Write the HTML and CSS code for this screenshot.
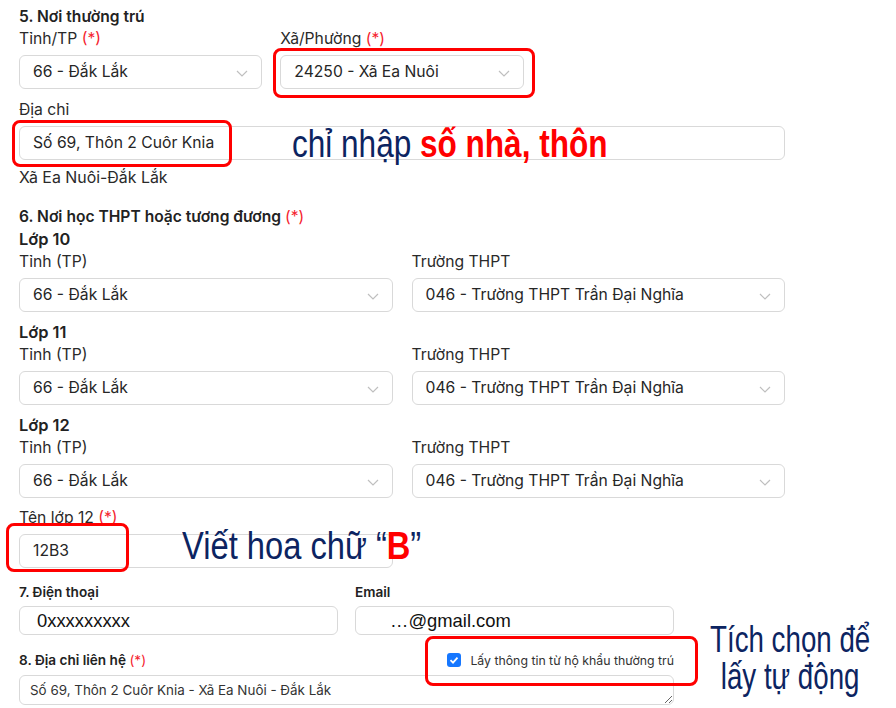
FILE: index.html
```html
<!DOCTYPE html>
<html lang="vi">
<head>
  <meta charset="UTF-8">
  <title>Hồ sơ đăng ký</title>
  <link rel="stylesheet" href="styles.css">
</head>
<body>
  <div class="form">
    <div class="sec-title">5. Nơi thường trú</div>
    <div class="grid3">
      <div class="field">
        <label>Tỉnh/TP <span class="req">(*)</span></label>
        <div class="select">66 - Đắk Lắk<svg class="arrow" viewBox="0 0 12 7"><polyline points="1,1 6,6 11,1"/></svg></div>
      </div>
      <div class="field">
        <label>Xã/Phường <span class="req">(*)</span></label>
        <div class="select">24250 - Xã Ea Nuôi<svg class="arrow" viewBox="0 0 12 7"><polyline points="1,1 6,6 11,1"/></svg></div>
      </div>
    </div>
    <div class="field addr-gap">
      <label>Địa chỉ</label>
      <div class="input">Số 69, Thôn 2 Cuôr Knia</div>
      <div class="hint">Xã Ea Nuôi-Đắk Lắk</div>
    </div>

    <div class="sec-title sec-gap">6. Nơi học THPT hoặc tương đương <span class="req">(*)</span></div>

    <div class="grade">Lớp 10</div>
    <div class="grid2">
      <div class="field">
        <label>Tỉnh (TP)</label>
        <div class="select">66 - Đắk Lắk<svg class="arrow" viewBox="0 0 12 7"><polyline points="1,1 6,6 11,1"/></svg></div>
      </div>
      <div class="field">
        <label>Trường THPT</label>
        <div class="select">046 - Trường THPT Trần Đại Nghĩa<svg class="arrow" viewBox="0 0 12 7"><polyline points="1,1 6,6 11,1"/></svg></div>
      </div>
    </div>

    <div class="grade gap-top">Lớp 11</div>
    <div class="grid2">
      <div class="field">
        <label>Tỉnh (TP)</label>
        <div class="select">66 - Đắk Lắk<svg class="arrow" viewBox="0 0 12 7"><polyline points="1,1 6,6 11,1"/></svg></div>
      </div>
      <div class="field">
        <label>Trường THPT</label>
        <div class="select">046 - Trường THPT Trần Đại Nghĩa<svg class="arrow" viewBox="0 0 12 7"><polyline points="1,1 6,6 11,1"/></svg></div>
      </div>
    </div>

    <div class="grade gap-top">Lớp 12</div>
    <div class="grid2">
      <div class="field">
        <label>Tỉnh (TP)</label>
        <div class="select">66 - Đắk Lắk<svg class="arrow" viewBox="0 0 12 7"><polyline points="1,1 6,6 11,1"/></svg></div>
      </div>
      <div class="field">
        <label>Trường THPT</label>
        <div class="select">046 - Trường THPT Trần Đại Nghĩa<svg class="arrow" viewBox="0 0 12 7"><polyline points="1,1 6,6 11,1"/></svg></div>
      </div>
    </div>

    <div class="grid2 gap-top">
      <div class="field">
        <label>Tên lớp 12 <span class="req">(*)</span></label>
        <div class="input">12B3</div>
      </div>
    </div>

    <div class="contact">
      <div class="grid2 small">
        <div class="field">
          <label class="strong">7. Điện thoại</label>
          <div class="input big">0xxxxxxxxx</div>
        </div>
        <div class="field">
          <label class="strong">Email</label>
          <div class="input big email">…@gmail.com</div>
        </div>
      </div>

      <div class="addr-head">
        <label class="strong">8. Địa chỉ liên hệ <span class="req">(*)</span></label>
        <div class="check">
          <span class="box"><svg viewBox="0 0 14 14"><polyline points="3.5,7.2 6,9.6 10.5,4.6"/></svg></span>
          Lấy thông tin từ hộ khẩu thường trú
        </div>
      </div>
      <textarea class="area" rows="1">Số 69, Thôn 2 Cuôr Knia - Xã Ea Nuôi - Đắk Lắk</textarea>
    </div>
  </div>

  <!-- chú thích hướng dẫn -->
  <div class="mark mark-ward"></div>
  <div class="mark mark-addr"></div>
  <div class="mark mark-class"></div>
  <div class="mark mark-check"></div>

  <div class="note note-addr">chỉ nhập <b>số nhà, thôn</b></div>
  <div class="note note-class">Viết hoa chữ “<b>B</b>”</div>
  <div class="note note-check">Tích chọn để<br>lấy tự động</div>
</body>
</html>
```

FILE: styles.css
```css
body {
  margin: 0;
  font-family: Inter, "Noto Sans", sans-serif;
  color: #2a2a2a;
  background: #fff;
  position: relative;
}

.form {
  width: 766px;
  padding: 5px 19px 0;
}

.sec-title {
  font-size: 15.6px;
  font-weight: 600;
  line-height: 20px;
  padding-top: 2px;
  color: #222;
}

.sec-gap {
  margin-top: 17px;
}

.grade {
  font-size: 16.4px;
  font-weight: 600;
  line-height: 21px;
  padding-top: 2px;
  color: #222;
}

.gap-top {
  margin-top: 8px;
}

.addr-gap {
  margin-top: 9px;
}

.req {
  color: #f5222d;
  font-weight: 400;
}

.grid3 {
  display: grid;
  grid-template-columns: repeat(3, 1fr);
  column-gap: 18px;
}

.grid2 {
  display: grid;
  grid-template-columns: 1fr 1fr;
  column-gap: 19px;
}

.field label {
  display: block;
  font-size: 15.7px;
  line-height: 20px;
  padding-top: 2px;
  margin-bottom: 6px;
}

.select, .input {
  box-sizing: border-box;
  height: 34px;
  border: 1px solid #d9d9d9;
  border-radius: 6px;
  padding: 0 13px;
  font-size: 15.7px;
  line-height: 32px;
  color: #262626;
  position: relative;
}

.arrow {
  position: absolute;
  right: 13px;
  top: 14px;
  width: 12px;
  height: 7px;
  fill: none;
  stroke: #bfbfbf;
  stroke-width: 1.2;
}

.hint {
  font-size: 15.9px;
  line-height: 20px;
  padding-top: 2px;
  margin-top: 6px;
}

.contact {
  width: 655px;
  margin-top: 12px;
}

.grid2.small {
  column-gap: 17px;
}

.field label.strong, .addr-head label.strong {
  font-size: 13.6px;
  font-weight: 600;
  line-height: 20px;
  padding-top: 2px;
  margin-bottom: 4px;
  color: #222;
}

.input.big {
  height: 29px;
  line-height: 27px;
  font-family: "Liberation Sans", Arial, sans-serif;
  font-size: 18.4px;
  color: #111;
  padding-left: 17px;
}

.input.email {
  padding-left: 34px;
}

.addr-head {
  display: flex;
  justify-content: space-between;
  align-items: center;
  margin-top: 13px;
  margin-bottom: 1px;
}

.addr-head label {
  margin-bottom: 0;
}

.check {
  display: flex;
  align-items: center;
  gap: 9px;
  font-size: 12.3px;
  color: #333;
  margin-top: -2px;
}

.box {
  width: 14px;
  height: 14px;
  border-radius: 3px;
  background: #1677ff;
  display: inline-flex;
}

.box svg {
  width: 14px;
  height: 14px;
  fill: none;
  stroke: #fff;
  stroke-width: 1.8;
}

.area {
  display: block;
  box-sizing: border-box;
  width: 655px;
  height: 30px;
  border: 1px solid #d9d9d9;
  border-radius: 6px;
  padding: 5px 10px;
  font-family: Inter, "Noto Sans", sans-serif;
  font-size: 13.4px;
  line-height: 18px;
  color: #333;
  resize: vertical;
  overflow: hidden;
  margin: 0;
}

/* red annotation boxes */
.mark {
  position: absolute;
  box-sizing: border-box;
  border: 3px solid #f00;
  border-radius: 8px;
}

.mark-ward { left: 273px; top: 48px; width: 262px; height: 50px; }
.mark-addr { left: 12px; top: 120px; width: 220px; height: 47px; }
.mark-class { left: 6px; top: 523px; width: 123px; height: 49px; }
.mark-check { left: 425px; top: 636px; width: 273px; height: 50px; }

/* condensed handwriting-style notes */
.note {
  position: absolute;
  font-family: "Liberation Sans", sans-serif;
  font-size: 38px;
  line-height: 38px;
  color: #0c2461;
  white-space: nowrap;
  transform-origin: left top;
}

.note b {
  color: #f00;
}

.note-addr { left: 292px; top: 125px; transform: scaleX(0.83); }
.note-class { left: 182px; top: 527px; transform: scaleX(0.86); }
.note-check { left: 710px; top: 621px; font-size: 36px; text-align: center; line-height: 37px; transform: scaleX(0.77); }
```
